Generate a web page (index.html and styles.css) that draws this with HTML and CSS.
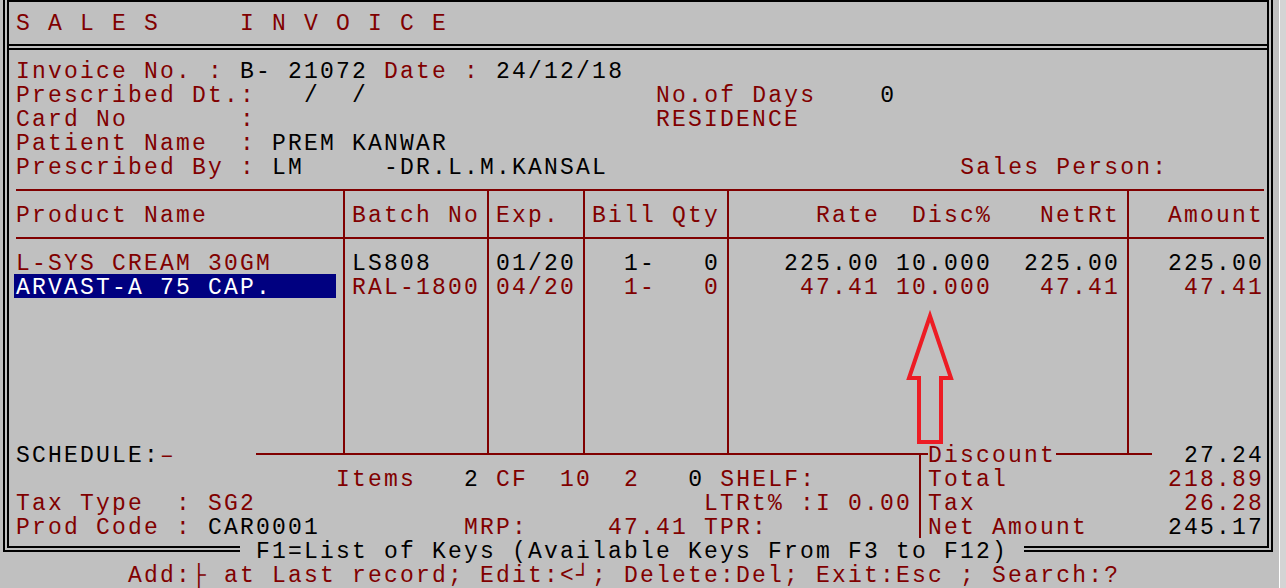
FILE: index.html
```
<!DOCTYPE html>
<html lang="en">
<head>
    <meta charset="UTF-8">
    <meta name="viewport" content="width=device-width, initial-scale=1.0">
    <title>Sales Invoice</title>
    <link rel="stylesheet" href="styles.css">
</head>
<body>
    <div class="console">
        <div class="window">
            <header class="title-box">
                <h1 class="title">S A L E S     I N V O I C E</h1>
            </header>

            <main class="invoice">
                <!-- bill header -->
                <div class="info">
                    <div class="row">Invoice No. : <span class="v">B- 21072</span> Date : <span class="v">24/12/18</span></div>
                    <div class="row">Prescribed Dt.:<span class="v">   /  /</span>                  No.of Days    <span class="v">0</span></div>
                    <div class="row">Card No       :                         RESIDENCE</div>
                    <div class="row">Patient Name  : <span class="v">PREM KANWAR</span></div>
                    <div class="row">Prescribed By : <span class="v">LM     -DR.L.M.KANSAL</span>                      Sales Person:</div>
                </div>

                <!-- item lines -->
                <div class="items">
                    <div class="cell head first"><div class="row">Product Name</div></div>
                    <div class="cell head"><div class="row">Batch No</div></div>
                    <div class="cell head"><div class="row">Exp.</div></div>
                    <div class="cell head"><div class="row">Bill Qty</div></div>
                    <div class="cell head"><div class="row">     Rate  Disc%   NetRt</div></div>
                    <div class="cell head last"><div class="row">  Amount</div></div>

                    <div class="cell body first">
                        <div class="row">L-SYS CREAM 30GM</div>
                        <div class="row hl">ARVAST-A 75 CAP.</div>
                    </div>
                    <div class="cell body">
                        <div class="row v">LS808</div>
                        <div class="row">RAL-1800</div>
                    </div>
                    <div class="cell body">
                        <div class="row v">01/20</div>
                        <div class="row">04/20</div>
                    </div>
                    <div class="cell body">
                        <div class="row v">  1-   0</div>
                        <div class="row">  1-   0</div>
                    </div>
                    <div class="cell body">
                        <div class="row v">   225.00 10.000  225.00</div>
                        <div class="row">    47.41 10.000   47.41</div>
                    </div>
                    <div class="cell body last">
                        <div class="row v">  225.00</div>
                        <div class="row">   47.41</div>
                    </div>
                </div>

                <!-- totals -->
                <div class="summary">
                    <div class="sum-left">
                        <div class="row rule-row"><span class="v">SCHEDULE:</span><span>–</span><span class="rule"></span></div>
                        <div class="row">                    Items   <span class="v">2</span> CF  10  2   <span class="v">0</span> SHELF:</div>
                        <div class="row">Tax Type  : SG2                            LTRt% :I 0.00</div>
                        <div class="row">Prod Code : <span class="v">CAR0001</span>         MRP:     47.41 TPR:</div>
                    </div>
                    <div class="split"></div>
                    <div class="sum-right">
                        <div class="row total"><span>Discount</span><span class="rule short"></span><span class="amount v">27.24</span></div>
                        <div class="row total"><span>Total</span><span class="amount">218.89</span></div>
                        <div class="row total"><span>Tax</span><span class="amount">26.28</span></div>
                        <div class="row total"><span>Net Amount</span><span class="amount v">245.17</span></div>
                    </div>
                </div>
            </main>
        </div>

        <div class="keys">
            <span class="keys-rule keys-rule-left"></span>
            <span class="keys-label">F1=List of Keys (Available Keys From F3 to F12)</span>
            <span class="keys-rule keys-rule-right"></span>
        </div>
        <div class="status">Add:├ at Last record; Edit:&lt;┘; Delete:Del; Exit:Esc ; Search:?</div>
    </div>
    <div class="edge"></div>

    <svg class="pointer" width="50" height="136" viewBox="0 0 50 136">
        <polygon points="25,6 4,68 14,68 14,132 36,132 36,68 46,68" fill="none" stroke="#ed1c24" stroke-width="4"/>
    </svg>
</body>
</html>
```

FILE: styles.css
```
body {
    margin: 0;
    height: 588px;
    display: flex;
    overflow: hidden;
    background-color: #c0c0c0;
    color: #800000;
    font-family: "Liberation Mono", "DejaVu Sans Mono", monospace;
    font-size: 23px;
    /* taller line box drops the baseline 2px inside each 24px row */
    line-height: 28px;
    letter-spacing: 2.2px;
}

/* text screen, 16px per character cell */
.console {
    width: 1279px;
    flex: none;
}

.edge {
    flex: 1;
    border-left: 1px solid #ffffff;
    background-color: #d4d4d4;
}

.window {
    margin: 0 6px 0 3px;
    border-left: 6px double #000000;
    border-right: 6px double #000000;
}

.row {
    height: 24px;
    white-space: pre;
}

.v {
    color: #000000;
}

.title-box {
    padding: 8px 3px 10px 7px;
    margin-bottom: 2px;
    border-top: 2px solid #000000;
    border-bottom: 2px solid #000000;
}

.title {
    height: 24px;
    margin: 0;
    font: inherit;
    white-space: pre;
}

.invoice {
    padding: 8px 3px 0 7px;
    border-top: 2px solid #000000;
}

.items {
    display: grid;
    grid-template-columns: 329px 144px 96px 144px 400px 1fr;
    margin-top: 11px;
    border-top: 2px solid #800000;
}

.cell {
    padding-left: 7px;
    border-right: 2px solid #800000;
}

.cell.first {
    padding-left: 0;
}

.cell.last {
    border-right: none;
}

.cell.head {
    padding-top: 11px;
    padding-bottom: 11px;
    border-bottom: 2px solid #800000;
}

.cell.body {
    height: 192px;
    padding-top: 11px;
    padding-bottom: 13px;
}

.hl {
    width: 322px;
    box-sizing: border-box;
    margin-left: -2px;
    padding-left: 2px;
    background-color: #000080;
    color: #ffffff;
}

.summary {
    display: grid;
    grid-template-columns: 896px 16px 1fr;
    margin-top: -13px;
}

.rule-row,
.total {
    display: flex;
}

.rule {
    flex: 1;
    align-self: flex-start;
    height: 11px;
    margin-left: 80px;
    border-bottom: 2px solid #800000;
}

.rule.short {
    flex: none;
    width: 96px;
    margin-left: 0;
}

.split {
    margin-top: 11px;
    border-top: 2px solid #800000;
}

.split::before {
    content: "";
    display: block;
    height: 100%;
    margin-left: 7px;
    border-left: 2px solid #800000;
}

.amount {
    margin-left: auto;
}

.keys {
    display: flex;
    height: 24px;
    margin: 0 6px 0 3px;
}

.keys-rule {
    height: 14px;
    box-sizing: border-box;
    border-bottom: 6px double #000000;
}

.keys-rule-left {
    width: 237px;
    border-left: 6px double #000000;
}

.keys-rule-right {
    flex: 1;
    border-right: 6px double #000000;
}

.keys-label {
    height: 24px;
    padding: 0 16px;
    color: #000000;
    white-space: pre;
}

.status {
    height: 24px;
    padding-left: 128px;
    white-space: pre;
}

.pointer {
    position: absolute;
    left: 905px;
    top: 310px;
}
```
